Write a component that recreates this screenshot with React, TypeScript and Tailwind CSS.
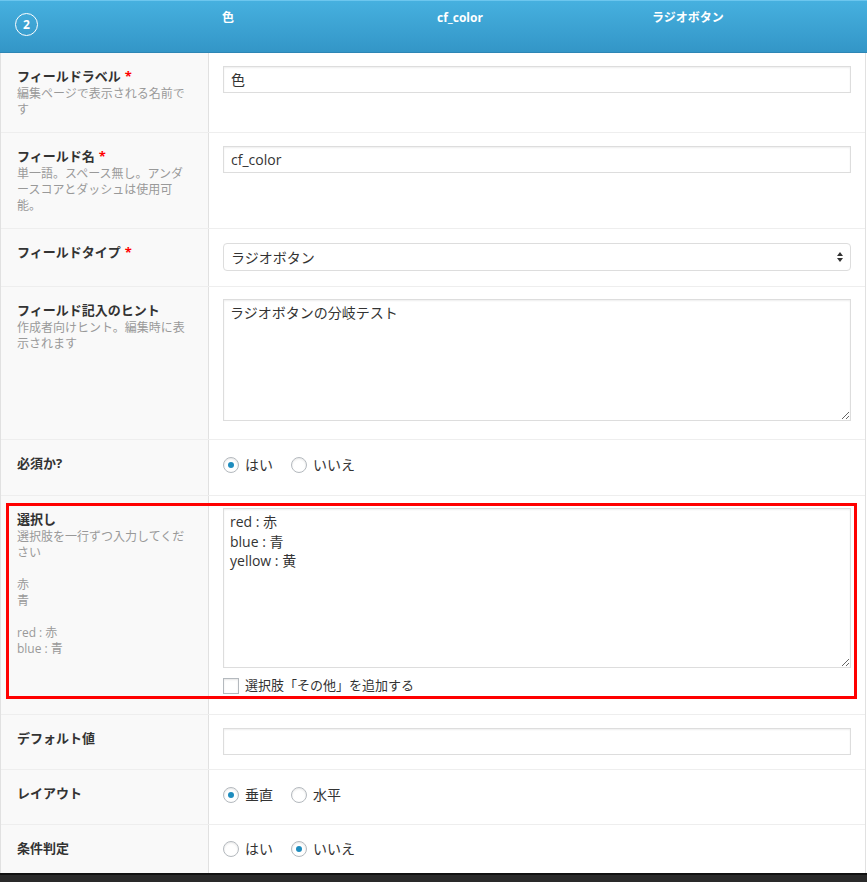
import React from "react";

const font = "font-['Open_Sans','Noto_Sans_CJK_JP',sans-serif]";

const Label = ({ text, required }: { text: string; required?: boolean }) => (
  <p className="text-[13px] leading-5 font-bold text-[#333]">
    {text}
    {required && <span className="text-[#f00] ml-1">*</span>}
  </p>
);

const Desc = ({ children }: { children: React.ReactNode }) => (
  <p className="text-[12px] leading-4 text-[#999] pr-4">{children}</p>
);

const Radio = ({ label, checked }: { label: string; checked?: boolean }) => (
  <label className="flex items-center gap-[6px] mr-[18px]">
    <span className="w-4 h-4 rounded-full border border-[#b4b9be] bg-white shadow-[inset_0_1px_2px_rgba(0,0,0,0.1)] flex items-center justify-center">
      {checked && <span className="w-[6px] h-[6px] rounded-full bg-[#1e8cbe]" />}
    </span>
    <span className="text-[14px] text-[#333]">{label}</span>
  </label>
);

const TextInput = ({ value }: { value: string }) => (
  <div className="h-[27px] w-full border border-[#ddd] bg-white shadow-[inset_0_1px_2px_rgba(0,0,0,0.07)] px-[7px] flex items-center text-[14px] text-[#333]">
    {value}
  </div>
);

const Row = ({
  h,
  left,
  right,
  rightPt,
  last,
  children,
}: {
  h: string;
  left: React.ReactNode;
  right: React.ReactNode;
  rightPt: string;
  last?: boolean;
  children?: React.ReactNode;
}) => (
  <div className={`relative flex items-stretch ${last ? "" : "border-b border-[#eee]"} ${h}`}>
    <div className="w-[208px] shrink-0 bg-[#f9f9f9] border-r border-[#e1e1e1] pl-[16px] pt-[13px]">
      {left}
    </div>
    <div className={`flex-1 pl-[14px] pr-[14px] ${rightPt}`}>{right}</div>
    {children}
  </div>
);

export default function App() {
  return (
    <div className={`w-[867px] h-[882px] bg-white overflow-hidden ${font}`}>
      {/* header */}
      <div className="h-[53px] bg-gradient-to-b from-[#46b0df] to-[#3396c7] border-t border-[#6cc6ee] border-b border-b-[#2d86b5] flex">
        <div className="w-[208px] pl-[15px] pt-[12px]">
          <div className="w-[23px] h-[23px] rounded-full border border-white flex items-center justify-center text-white text-[12px] font-bold">
            2
          </div>
        </div>
        <div className="flex pt-[8px] pl-[20px] text-white text-[12px] font-bold">
          <span className="w-[215px]">色</span>
          <span className="w-[215px]">cf_color</span>
          <span className="w-[215px]">ラジオボタン</span>
        </div>
      </div>

      <div className="border-l border-[#e1e1e1] border-r border-r-[#e1e1e1] mr-[1px]">
        <Row
          h="h-[80px]"
          rightPt="pt-[13px]"
          left={
            <>
              <Label text="フィールドラベル" required />
              <Desc>編集ページで表示される名前です</Desc>
            </>
          }
          right={<TextInput value="色" />}
        />
        <Row
          h="h-[96px]"
          rightPt="pt-[13px]"
          left={
            <>
              <Label text="フィールド名" required />
              <Desc>単一語。スペース無し。アンダースコアとダッシュは使用可能。</Desc>
            </>
          }
          right={<TextInput value="cf_color" />}
        />
        <Row
          h="h-[58px]"
          rightPt="pt-[14px]"
          left={<Label text="フィールドタイプ" required />}
          right={
            <div className="h-[28px] w-full border border-[#ddd] rounded-[4px] bg-white px-[7px] flex items-center justify-between text-[14px] text-[#333]">
              <span>ラジオボタン</span>
              <svg width="6" height="10" viewBox="0 0 6 10">
                <path d="M3 0 L6 4 L0 4 Z" fill="#333" />
                <path d="M0 6 L6 6 L3 10 Z" fill="#333" />
              </svg>
            </div>
          }
        />
        <Row
          h="h-[153px]"
          rightPt="pt-[12px]"
          left={
            <>
              <Label text="フィールド記入のヒント" />
              <Desc>作成者向けヒント。編集時に表示されます</Desc>
            </>
          }
          right={
            <textarea
              readOnly
              defaultValue="ラジオボタンの分岐テスト"
              className="w-full h-[122px] border border-[#ddd] bg-white shadow-[inset_0_1px_2px_rgba(0,0,0,0.07)] px-[6px] py-[3px] text-[14px] leading-[20px] text-[#333] outline-none block resize-y"
            />
          }
        />
        <Row
          h="h-[56px]"
          rightPt="pt-[14px]"
          left={<Label text="必須か?" />}
          right={
            <div className="flex items-start">
              <Radio label="はい" checked />
              <Radio label="いいえ" />
            </div>
          }
        />
        <Row
          h="h-[219px]"
          rightPt="pt-[12px]"
          left={
            <>
              <Label text="選択し" />
              <Desc>
                選択肢を一行ずつ入力してください
                <br />
                <br />
                赤
                <br />
                青
                <br />
                <br />
                red : 赤
                <br />
                blue : 青
              </Desc>
            </>
          }
          right={
            <>
              <textarea
                readOnly
                defaultValue={"red : 赤\nblue : 青\nyellow : 黄"}
                className="w-full h-[160px] border border-[#ddd] bg-white shadow-[inset_0_1px_2px_rgba(0,0,0,0.07)] px-[6px] py-[3px] text-[14px] leading-[19.6px] text-[#333] outline-none block resize-y"
              />
              <label className="flex items-center gap-[6px] mt-[8px]">
                <span className="w-4 h-4 border border-[#b4b9be] bg-white shadow-[inset_0_1px_2px_rgba(0,0,0,0.1)]" />
                <span className="text-[13px] text-[#333]">選択肢「その他」を追加する</span>
              </label>
            </>
          }
        >
          {/* highlight box */}
          <div className="absolute left-[5px] top-[7px] right-[8px] bottom-[15px] border-[3px] border-[#ff0000] pointer-events-none" />
        </Row>
        <Row
          h="h-[55px]"
          rightPt="pt-[13px]"
          left={<Label text="デフォルト値" />}
          right={<TextInput value="" />}
        />
        <Row
          h="h-[55px]"
          rightPt="pt-[14px]"
          left={<Label text="レイアウト" />}
          right={
            <div className="flex items-start">
              <Radio label="垂直" checked />
              <Radio label="水平" />
            </div>
          }
        />
        <Row
          h="h-[48px]"
          rightPt="pt-[13px]"
          last
          left={<Label text="条件判定" />}
          right={
            <div className="flex items-start">
              <Radio label="はい" />
              <Radio label="いいえ" checked />
            </div>
          }
        />
      </div>

      {/* dark bar */}
      <div className="h-[9px] bg-[#2a2a2a] border-t-2 border-[#111]" />
    </div>
  );
}
